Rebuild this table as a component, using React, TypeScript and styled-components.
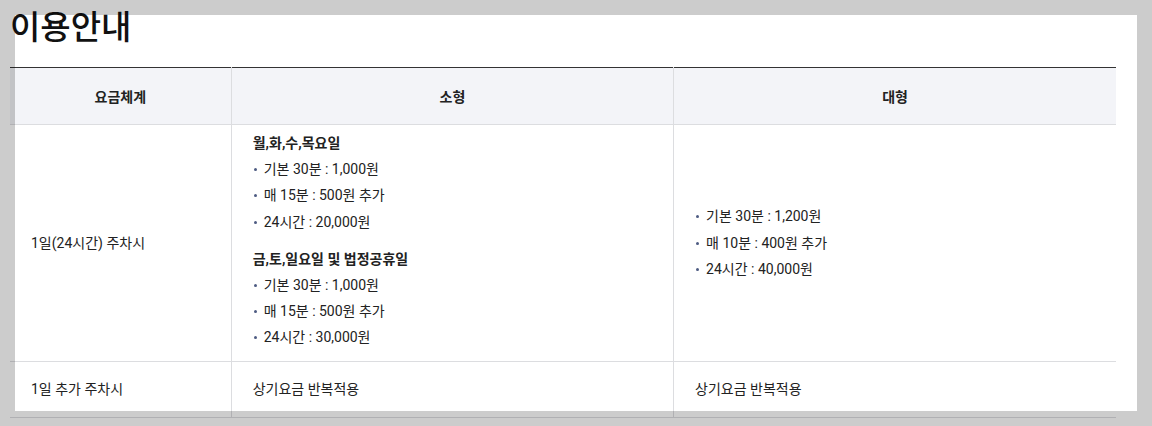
import React from 'react';
import styled, {createGlobalStyle} from 'styled-components';

const GlobalStyle = createGlobalStyle`
    html, body {
        margin: 0;
        padding: 0;
        background: #ffffff;
    }

    body {
        font-family: Roboto, "Noto Sans CJK KR", sans-serif;
        color: #222222;
    }
`;

interface Plan {
    title?: string;
    items: string[];
}

const smallCar: Plan[] = [
    {title: '월,화,수,목요일', items: ['기본 30분 : 1,000원', '매 15분 : 500원 추가', '24시간 : 20,000원']},
    {title: '금,토,일요일 및 법정공휴일', items: ['기본 30분 : 1,000원', '매 15분 : 500원 추가', '24시간 : 30,000원']},
];

const largeCar: Plan[] = [
    {items: ['기본 30분 : 1,200원', '매 10분 : 400원 추가', '24시간 : 40,000원']},
];

const PlanList = ({plans}: {plans: Plan[]}) => (
    <>
        {plans.map((plan, i) => (
            <PlanBlock key={i}>
                {plan.title && <PlanTitle>{plan.title}</PlanTitle>}
                <BulletList>
                    {plan.items.map((item) => (
                        <BulletItem key={item}>{item}</BulletItem>
                    ))}
                </BulletList>
            </PlanBlock>
        ))}
    </>
);

const App = () => {
    return (
        <>
            <GlobalStyle/>
            <Page>
                <Heading>{'이용안내'}</Heading>
                <FeeTable>
                    <colgroup>
                        <col style={{width: '20%'}}/>
                        <col style={{width: '40%'}}/>
                        <col style={{width: '40%'}}/>
                    </colgroup>
                    <thead>
                        <tr>
                            <HeadCell>{'요금체계'}</HeadCell>
                            <HeadCell>{'소형'}</HeadCell>
                            <HeadCell>{'대형'}</HeadCell>
                        </tr>
                    </thead>
                    <tbody>
                        <tr>
                            <BodyCell>{'1일(24시간) 주차시'}</BodyCell>
                            <BodyCell $tight={true}>
                                <PlanList plans={smallCar}/>
                            </BodyCell>
                            <BodyCell>
                                <PlanList plans={largeCar}/>
                            </BodyCell>
                        </tr>
                        <tr>
                            <BodyCell>{'1일 추가 주차시'}</BodyCell>
                            <BodyCell>{'상기요금 반복적용'}</BodyCell>
                            <BodyCell>{'상기요금 반복적용'}</BodyCell>
                        </tr>
                    </tbody>
                </FeeTable>
            </Page>
            <Spotlight/>
        </>
    );
};

const Page = styled.div`
    width: 1106px;
    padding: 2px 0 0 10px;
`;

const Heading = styled.h2`
    margin: 0 0 19px;
    font-family: "Noto Sans CJK KR", sans-serif;
    font-size: 33px;
    font-weight: 500;
    line-height: 46px;
    color: #111111;
`;

const FeeTable = styled.table`
    width: 100%;
    table-layout: fixed;
    border-collapse: collapse;
    border-top: 1px solid #333333;
    font-size: 14px;
`;

const HeadCell = styled.th`
    height: 56px;
    padding: 0 20px;
    background: #f3f4f8;
    border-bottom: 1px solid #dcdde0;
    border-left: 1px solid #dcdde0;
    font-weight: 700;
    text-align: center;
    vertical-align: middle;

    &:first-child {
        border-left: none;
    }
`;

const BodyCell = styled.td<{$tight?: boolean}>`
    height: 56px;
    box-sizing: border-box;
    padding: ${({$tight}) => ($tight ? '5px 20px 10px 21px' : '0 20px 0 21px')};
    border-bottom: 1px solid #dcdde0;
    border-left: 1px solid #dcdde0;
    vertical-align: middle;
    line-height: 26px;

    &:first-child {
        border-left: none;
    }
`;

const PlanBlock = styled.div`
    & + & {
        margin-top: 11px;
    }
`;

const PlanTitle = styled.div`
    font-weight: 700;
    line-height: 26px;
`;

const BulletList = styled.ul`
    margin: 0;
    padding: 0;
    list-style: none;
`;

const BulletItem = styled.li`
    position: relative;
    padding-left: 11px;
    line-height: 26.3px;

    &::before {
        content: '';
        position: absolute;
        left: 1px;
        top: 12px;
        width: 3px;
        height: 3px;
        border-radius: 50%;
        background: #4d5b82;
    }
`;

// dims everything outside the highlighted box
const Spotlight = styled.div`
    position: fixed;
    left: 15px;
    top: 15px;
    width: 1122px;
    height: 396px;
    box-shadow: 0 0 0 2000px rgba(0, 0, 0, 0.2);
    pointer-events: none;
`;

export default App;
